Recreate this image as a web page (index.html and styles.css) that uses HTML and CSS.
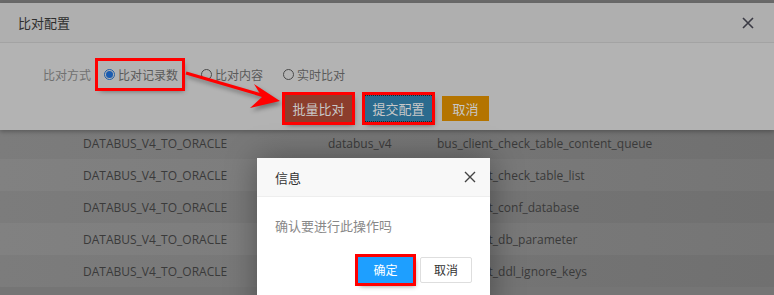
FILE: index.html
```html
<!DOCTYPE html>
<html lang="zh">
<head>
<meta charset="utf-8">
<link rel="stylesheet" href="styles.css">
</head>
<body>
<div class="page">
  <div class="topstrip"></div>
  <section class="cfg">
    <header class="cfg-head">
      <span class="cfg-title">比对配置</span>
      <span class="cfg-close">
        <svg width="12" height="12" viewBox="0 0 12 12"><path d="M1 1L11 11M11 1L1 11" stroke="#3a3a44" stroke-width="1.6"/></svg>
      </span>
    </header>
    <div class="cfg-body">
      <div class="mode-row">
        <span class="mode-label">比对方式</span>
        <label class="radio hl"><span class="dot on"></span>比对记录数</label>
        <label class="radio"><span class="dot"></span>比对内容</label>
        <label class="radio"><span class="dot"></span>实时比对</label>
      </div>
      <div class="btn-row">
        <button class="btn btn-red hl">批量比对</button>
        <button class="btn btn-blue hl focus">提交配置</button>
        <button class="btn btn-orange">取消</button>
      </div>
    </div>
  </section>

  <div class="grid">
    <div class="row"><span>DATABUS_V4_TO_ORACLE</span><span>databus_v4</span><span>bus_client_check_table_content_queue</span></div>
    <div class="row alt"><span>DATABUS_V4_TO_ORACLE</span><span>databus_v4</span><span>bus_client_check_table_list</span></div>
    <div class="row"><span>DATABUS_V4_TO_ORACLE</span><span>databus_v4</span><span>bus_client_conf_database</span></div>
    <div class="row alt"><span>DATABUS_V4_TO_ORACLE</span><span>databus_v4</span><span>bus_client_db_parameter</span></div>
    <div class="row"><span>DATABUS_V4_TO_ORACLE</span><span>databus_v4</span><span>bus_client_ddl_ignore_keys</span></div>
  </div>

  <svg class="arrow" width="110" height="50" viewBox="0 0 110 50">
    <path d="M2 2L84 26" stroke="#ff0000" stroke-width="3.2" fill="none"/>
    <path d="M96 30L70 13L78 26L66 37Z" fill="#ff0000"/>
  </svg>

  <div class="modal">
    <div class="modal-head">
      <span>信息</span>
      <svg width="12" height="12" viewBox="0 0 12 12"><path d="M1 1L11 11M11 1L1 11" stroke="#444" stroke-width="1.4"/></svg>
    </div>
    <div class="modal-body">确认要进行此操作吗</div>
    <div class="modal-btns">
      <button class="mbtn mbtn-ok hl">确定</button>
      <button class="mbtn mbtn-cancel">取消</button>
    </div>
  </div>
</div>
</body>
</html>
```

FILE: styles.css
```css
* { box-sizing: border-box; }
html, body { margin: 0; padding: 0; }
body {
  width: 774px;
  height: 295px;
  overflow: hidden;
  background: #757575;
  font-family: "Noto Sans CJK SC", "Open Sans", sans-serif;
}
.page { position: relative; width: 774px; height: 295px; overflow: hidden; }
.topstrip { height: 3px; background: #6a6a6a; }

.cfg {
  background: #b3b3b3;
  height: 127px;
  box-shadow: 0 2px 4px rgba(0,0,0,0.25);
  position: relative;
  z-index: 2;
}
.cfg-head {
  height: 40px;
  background: #afafaf;
  border-bottom: 1px solid #a3a3a3;
  display: flex;
  align-items: center;
  justify-content: space-between;
  padding: 0 20px 0 18px;
}
.cfg-title { font-size: 13px; color: #2e2e2e; line-height: 1; }
.cfg-close { display: flex; }
.cfg-body { padding: 18px 0 0 43px; }
.mode-row {
  display: flex;
  align-items: center;
  height: 27px;
  font-size: 12px;
  color: #5d5d5d;
}
.mode-label { color: #707070; margin-right: 7px; }
.radio {
  display: flex;
  align-items: center;
  height: 27px;
  color: #5a5a5a;
  margin-right: 20px;
}
.radio.hl { padding: 0 4px 0 6px; margin-right: 19px; }
.dot {
  width: 11px; height: 11px;
  border: 1px solid #4a4a4a;
  border-radius: 50%;
  margin-right: 3px;
  display: inline-flex;
  align-items: center;
  justify-content: center;
}
.dot.on { border-color: #1f5fa8; }
.dot.on::after {
  content: "";
  width: 7px; height: 7px;
  border-radius: 50%;
  background: #1a5cb0;
}
.hl {
  outline: 3px solid #ff0000;
  outline-offset: 0;
  box-shadow: 2px 3px 5px rgba(0,0,0,0.45);
}
.btn-row {
  display: flex;
  align-items: center;
  gap: 13px;
  margin-top: 7px;
  margin-left: 242px;
}
.btn {
  font-family: inherit;
  font-size: 13px;
  border: none;
  height: 27px;
  padding: 0 7px;
  color: #c8c8c8;
  line-height: 27px;
}
.btn-red { background: #8c3d2c; width: 67px; }
.btn-blue { background: #2b6b8e; width: 67px; }
.btn-blue.focus { border-top: 1px dotted #222; border-bottom: 1px dotted #222; line-height: 25px; }
.btn-orange { background: #b47400; height: 25px; width: 47px; margin-left: -3px; line-height: 25px; }

.grid {
  position: relative;
  z-index: 1;
  margin-top: -3px;
  background: linear-gradient(90deg, #7c7c7c 0%, #777 40%, #707070 100%);
}
.row {
  display: grid;
  grid-template-columns: 245px 109px 1fr;
  padding-left: 83px;
  height: 32px;
  align-items: center;
  font-family: "Open Sans", "Noto Sans CJK SC", sans-serif;
  font-size: 12px;
  color: #3a3a3a;
}
.row.alt { background: rgba(255,255,255,0.04); }

.arrow {
  position: absolute;
  left: 184px;
  top: 71px;
  z-index: 3;
  filter: drop-shadow(2px 3px 2px rgba(0,0,0,0.35));
}

.modal {
  position: absolute;
  left: 257px;
  top: 158px;
  width: 233px;
  height: 160px;
  background: #fff;
  z-index: 4;
  box-shadow: 1px 1px 30px rgba(0,0,0,0.35);
}
.modal-head {
  height: 39px;
  background: #f8f8f8;
  border-bottom: 1px solid #eee;
  display: flex;
  align-items: center;
  justify-content: space-between;
  padding: 0 14px 0 18px;
  font-size: 13px;
  color: #333;
}
.modal-body {
  padding: 20px 18px 0 18px;
  font-size: 13px;
  color: #888;
  line-height: 18px;
}
.modal-btns {
  display: flex;
  justify-content: flex-end;
  gap: 7px;
  padding: 22px 18px 0 0;
}
.mbtn {
  font-family: inherit;
  font-size: 12px;
  height: 26px;
  border-radius: 2px;
  line-height: 24px;
  padding: 0;
}
.mbtn-ok { width: 55px; background: #1e9fff; color: #fff; border: 1px solid #1e9fff; border-radius: 0; }
.mbtn-cancel { width: 52px; background: #fff; color: #333; border: 1px solid #dedede; }
```
